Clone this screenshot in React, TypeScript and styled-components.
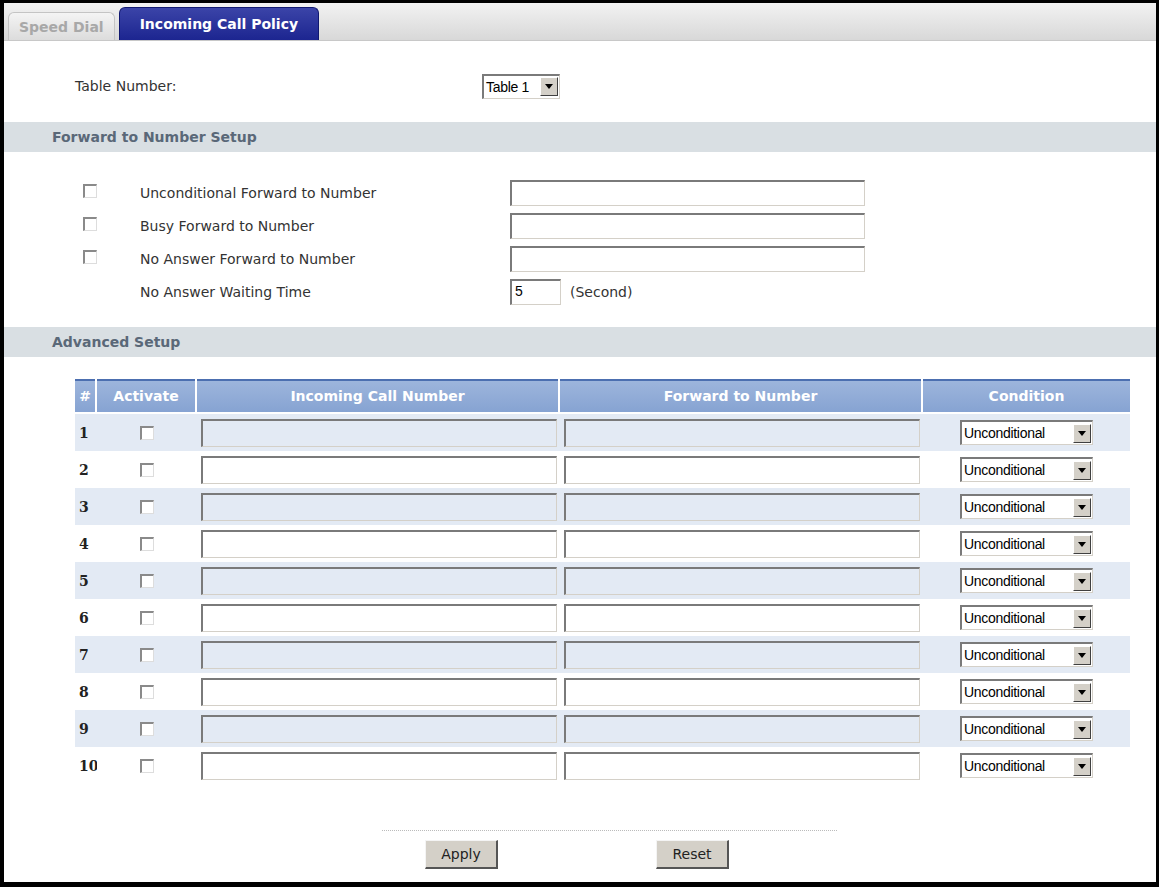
import React from "react";
import styled, { createGlobalStyle } from "styled-components";

const Global = createGlobalStyle`
  html, body { margin: 0; padding: 0; background: #000; }
  body { font-family: "DejaVu Sans", Verdana, sans-serif; font-size: 14px; color: #333; }
`;

const Frame = styled.div`
  width: 1152px; height: 879px; margin: 3px 3px 5px 4px;
  background: #fff; display: flex; flex-direction: column; overflow: hidden;
`;
const TabBar = styled.div`
  height: 37px; display: flex; align-items: flex-end; gap: 4px; padding-left: 4px;
  background: linear-gradient(#f2f2f2, #d8d8d8); border-bottom: 1px solid #c8c8c8;
`;
const Tab = styled.div<{ active?: boolean }>`
  height: ${p => (p.active ? 32 : 27)}px; padding: 0 ${p => (p.active ? 20 : 10)}px;
  display: flex; align-items: center; font-weight: bold; font-size: 14px;
  border-radius: 6px 6px 0 0;
  ${p => p.active
    ? "background: linear-gradient(#3b44a8,#1c2590); color: #fff; border: 1px solid #101870; border-bottom: none;"
    : "background: linear-gradient(#f4f4f4,#dcdcdc); color: #a8a8a8; border: 1px solid #c4c4c4; border-bottom: none;"}
`;
const Row = styled.div<{ h?: number }>`
  display: flex; align-items: center; height: ${p => p.h ?? 33}px; flex-shrink: 0;
`;
const Label = styled.div<{ left: number; w: number }>`
  margin-left: ${p => p.left}px; width: ${p => p.w}px; font-size: 14px; color: #333;
`;
const SectionBar = styled.div`
  height: 30px; background: #d9dfe3; display: flex; align-items: center; flex-shrink: 0;
  padding-left: 48px; font-weight: bold; color: #5a6878; font-size: 14px;
`;
const Check = styled.span`
  display: inline-block; width: 11px; height: 11px; background: #fff;
  border-top: 2px solid #8a8a8a; border-left: 2px solid #8a8a8a;
  border-right: 1px solid #ddd; border-bottom: 1px solid #ddd;
`;
const Text = styled.div<{ w: number; h?: number; bg?: string }>`
  width: ${p => p.w}px; height: ${p => p.h ?? 22}px; box-sizing: border-box;
  background: ${p => p.bg ?? "#fff"};
  border-top: 2px solid #7a7a7a; border-left: 2px solid #7a7a7a;
  border-right: 1px solid #d4d0c8; border-bottom: 1px solid #d4d0c8;
  font-family: "Liberation Sans", Arial, sans-serif; font-size: 14px; padding: 2px 3px; color: #000;
`;
const Select = styled.div<{ w: number }>`
  width: ${p => p.w}px; height: 25px; box-sizing: border-box; display: flex; align-items: center;
  background: #fff; border-top: 2px solid #7a7a7a; border-left: 2px solid #7a7a7a;
  border-right: 1px solid #d4d0c8; border-bottom: 1px solid #d4d0c8;
  font-family: "Liberation Sans", Arial, sans-serif; font-size: 14px; letter-spacing: -0.3px; color: #000;
  padding-left: 2px;
`;
const SelText = styled.span` flex: 1; `;
const Arrow = styled.span`
  width: 18px; height: 19px; margin-right: 1px; background: #d4d0c8;
  border-top: 1px solid #fff; border-left: 1px solid #fff; border-right: 1px solid #404040; border-bottom: 1px solid #404040;
  box-sizing: border-box; display: flex; align-items: center; justify-content: center;
  &::after { content: ""; border-left: 4px solid transparent; border-right: 4px solid transparent; border-top: 5px solid #000; }
`;
const TableWrap = styled.div` padding: 22px 0 0 71px; `;
const Grid = styled.div`
  display: grid; grid-template-columns: 22px 100px 363px 363px 207px; width: 1055px;
`;
const Head = styled.div<{ last?: boolean }>`
  height: 33px; background: linear-gradient(#4c6fb0 0 2px, #9db5dc 2px, #86a3d2);
  color: #fff; font-weight: bold; font-size: 14px; display: flex; align-items: center; justify-content: center;
  border-right: ${p => (p.last ? 0 : 2)}px solid #fff; box-sizing: border-box; margin-bottom: 2px;
`;
const Cell = styled.div<{ odd: boolean; center?: boolean }>`
  height: 37px; background: ${p => (p.odd ? "#e3eaf4" : "#fff")};
  display: flex; align-items: center; justify-content: ${p => (p.center ? "center" : "flex-start")};
  padding-left: ${p => (p.center ? 0 : 4)}px;
`;
const Num = styled(Cell)` font-weight: bold; color: #222; font-family: "DejaVu Serif", serif; font-size: 14px; padding-left: 4px; `;
const Footer = styled.div`
  margin-top: 46px; display: flex; flex-direction: column; align-items: center;
`;
const Dots = styled.div` width: 455px; border-top: 1px dotted #bbb; margin-left: 58px; `;
const Buttons = styled.div` display: flex; gap: 158px; margin-top: 9px; margin-left: -6px; `;
const Btn = styled.div`
  width: 73px; height: 29px; box-sizing: border-box; background: #d4d0c8;
  border-top: 1px solid #f4f4f4; border-left: 1px solid #f4f4f4;
  border-right: 2px solid #555; border-bottom: 2px solid #555;
  display: flex; align-items: center; justify-content: center; font-size: 14px; color: #222;
`;

const fwd = ["Unconditional Forward to Number", "Busy Forward to Number", "No Answer Forward to Number"];

export default function App() {
  const rows = Array.from({ length: 10 }, (_, i) => i + 1);
  return (
    <>
      <Global />
      <Frame>
        <TabBar>
          <Tab>Speed Dial</Tab>
          <Tab active>Incoming Call Policy</Tab>
        </TabBar>
        <Row h={30} />
        <Row h={30}>
          <Label left={71} w={407}>Table Number:</Label>
          <Select w={78}><SelText>Table 1</SelText><Arrow /></Select>
        </Row>
        <Row h={21} />
        <SectionBar>Forward to Number Setup</SectionBar>
        <Row h={24} />
        {fwd.map(f => (
          <Row key={f}>
            <Label left={79} w={57}><Check /></Label>
            <Label left={0} w={370}>{f}</Label>
            <Text w={355} h={26} />
          </Row>
        ))}
        <Row>
          <Label left={136} w={370}>No Answer Waiting Time</Label>
          <Text w={51} h={26}>5</Text>
          <Label left={9} w={100}>(Second)</Label>
        </Row>
        <Row h={19} />
        <SectionBar>Advanced Setup</SectionBar>
        <TableWrap>
          <Grid>
            <Head>#</Head>
            <Head>Activate</Head>
            <Head>Incoming Call Number</Head>
            <Head>Forward to Number</Head>
            <Head last>Condition</Head>
            {rows.map(r => {
              const odd = r % 2 === 1;
              const bg = odd ? "#e3eaf4" : "#fff";
              return (
                <React.Fragment key={r}>
                  <Num odd={odd}>{r}</Num>
                  <Cell odd={odd} center><Check /></Cell>
                  <Cell odd={odd}><Text w={356} h={28} bg={bg} /></Cell>
                  <Cell odd={odd}><Text w={356} h={28} bg={bg} /></Cell>
                  <Cell odd={odd} center><Select w={133}><SelText>Unconditional</SelText><Arrow /></Select></Cell>
                </React.Fragment>
              );
            })}
          </Grid>
        </TableWrap>
        <Footer>
          <Dots />
          <Buttons><Btn>Apply</Btn><Btn>Reset</Btn></Buttons>
        </Footer>
      </Frame>
    </>
  );
}
